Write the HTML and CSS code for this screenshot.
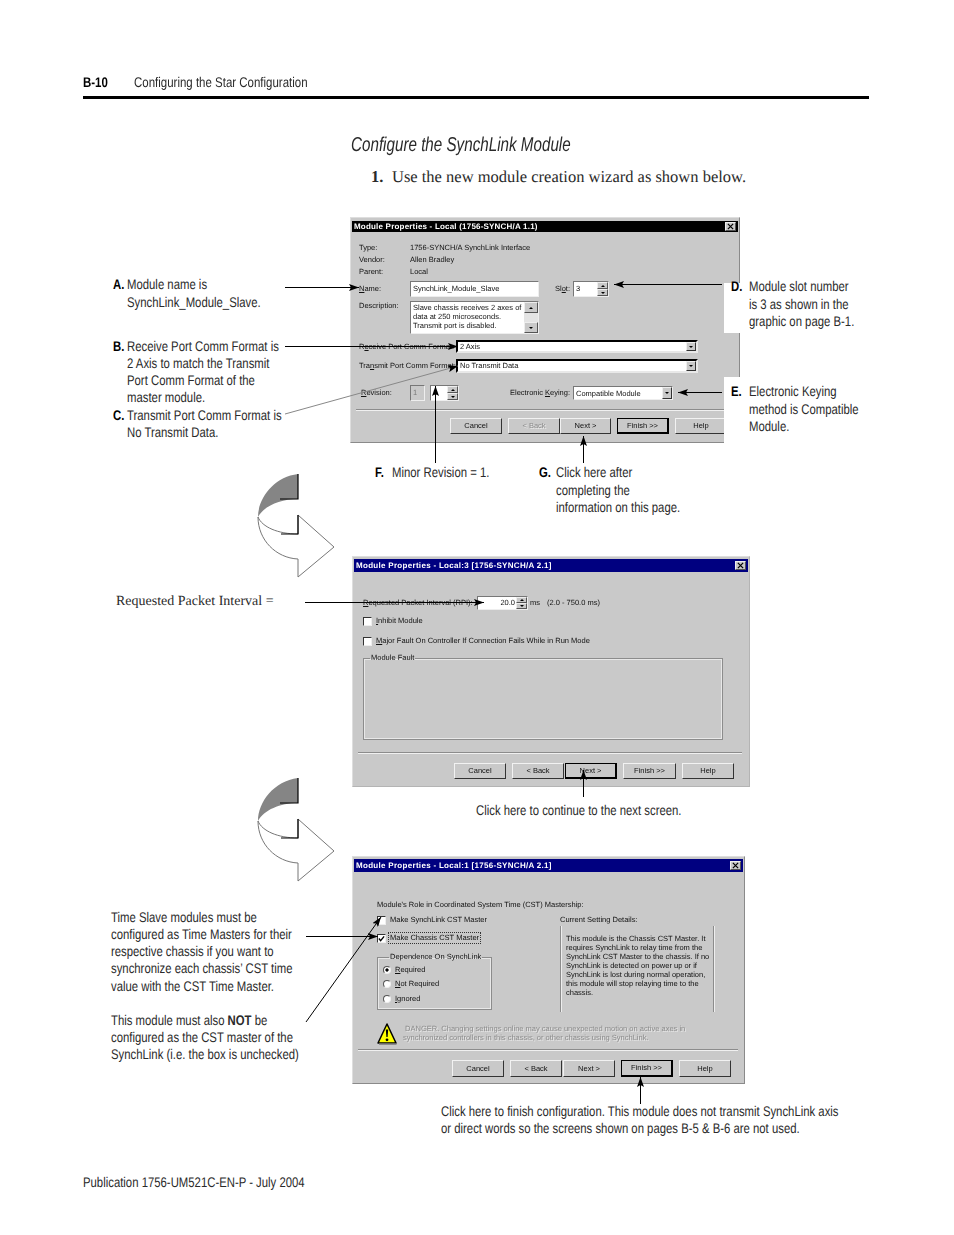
FILE: index.html
```html
<!DOCTYPE html>
<html lang="en">
<head>
  <meta charset="UTF-8" />
  <title>Configuring the Star Configuration</title>
  <link rel="stylesheet" href="styles.css">
</head>
<body>
  <div class="page">
    <header class="page-head">
      <b class="page-num">B-10</b>
      <span>Configuring the Star Configuration</span>
    </header>

    <h2 class="section-title">Configure the SynchLink Module</h2>
    <p class="step"><b>1.</b><span>Use the new module creation wizard as shown below.</span></p>

    <!-- first wizard page -->
    <section class="figure fig-one">
      <div class="notes-left">
        <div class="note note-a"><b>A.</b><span>Module name is<br>SynchLink_Module_Slave.</span></div>
        <div class="note"><b>B.</b><span>Receive Port Comm Format is<br>2 Axis to match the Transmit<br>Port Comm Format of the<br>master module.</span></div>
        <div class="note"><b>C.</b><span>Transmit Port Comm Format is<br>No Transmit Data.</span></div>
      </div>

      <div class="dialog dlg-one">
        <div class="titlebar black"><span>Module Properties - Local (1756-SYNCH/A 1.1)</span><i class="close"><svg viewBox="0 0 8 8"><path d="M1 1L7 7M7 1L1 7"/></svg></i></div>
        <div class="dlg-body">
          <div class="info"><span>Type:</span><span>1756-SYNCH/A SynchLink Interface</span></div>
          <div class="info"><span>Vendor:</span><span>Allen Bradley</span></div>
          <div class="info"><span>Parent:</span><span>Local</span></div>

          <div class="row name-row">
            <label class="lbl-51"><u>N</u>ame:</label>
            <div class="field name-field">SynchLink_Module_Slave</div>
            <label class="slot-lbl">Sl<u>o</u>t:</label>
            <div class="field spin slot-field">3<span class="spin-btns"><i class="up"></i><i class="down"></i></span></div>
          </div>

          <div class="row desc-row">
            <label class="lbl-51">Description:</label>
            <div class="field desc-field">Slave chassis receives 2 axes of<br>data at 250 microseconds.<br>Transmit port is disabled.
              <span class="scroll"><i class="up"></i><em></em><i class="down"></i></span>
            </div>
          </div>

          <div class="row combo-row rx-row">
            <label class="lbl-97">R<u>e</u>ceive Port Comm Format:</label>
            <div class="field combo wide-combo">2 Axis<span class="drop"></span></div>
          </div>
          <div class="row combo-row tx-row">
            <label class="lbl-97">Tra<u>n</u>smit Port Comm Format:</label>
            <div class="field combo wide-combo">No Transmit Data<span class="drop"></span></div>
          </div>

          <div class="row rev-row">
            <label class="lbl-51"><u>R</u>evision:</label>
            <div class="field rev-major">1</div>
            <div class="field spin rev-minor">1<span class="spin-btns"><i class="up"></i><i class="down"></i></span></div>
            <label class="key-lbl">Electronic <u>K</u>eying:</label>
            <div class="field combo key-combo">Compatible Module<span class="drop"></span></div>
          </div>

          <div class="sep sep-one"></div>
          <div class="buttons btns-one">
            <button>Cancel</button>
            <button class="off">&lt; Back</button>
            <button class="tight">Next &gt;</button>
            <button class="main">Finish &gt;&gt;</button>
            <button>Help</button>
          </div>
        </div>
      </div>

      <div class="note note-over note-d"><b>D.</b><span>Module slot number<br>is 3 as shown in the<br>graphic on page B-1.</span></div>
      <div class="note note-over note-e"><b>E.</b><span>Electronic Keying<br>method is Compatible<br>Module.</span></div>
    </section>

    <div class="notes-below">
      <div class="note note-f"><b>F.</b><span>Minor Revision = 1.</span></div>
      <div class="note note-g"><b>G.</b><span>Click here after<br>completing the<br>information on this page.</span></div>
    </div>

    <!-- RPI page -->
    <section class="figure fig-two">
      <p class="serif-note">Requested Packet Interval =</p>
      <div class="dialog dlg-two">
        <div class="titlebar"><span>Module Properties - Local:3 [1756-SYNCH/A 2.1]</span><i class="close"><svg viewBox="0 0 8 8"><path d="M1 1L7 7M7 1L1 7"/></svg></i></div>
        <div class="dlg-body">
          <div class="row rpi-row">
            <label class="lbl-114"><u>R</u>equested Packet Interval (RPI):</label>
            <div class="field spin rpi-field">20.0<span class="spin-btns"><i class="up"></i><i class="down"></i></span></div>
            <span class="unit">ms</span>
            <span>(2.0 - 750.0 ms)</span>
          </div>
          <div class="check-row inhibit"><i class="check"></i><span><u>I</u>nhibit Module</span></div>
          <div class="check-row major"><i class="check"></i><span><u>M</u>ajor Fault On Controller If Connection Fails While in Run Mode</span></div>
          <fieldset class="group fault-group"><legend>Module Fault</legend></fieldset>
          <div class="sep sep-two"></div>
          <div class="buttons btns-two">
            <button>Cancel</button>
            <button>&lt; Back</button>
            <button class="main">Next &gt;</button>
            <button>Finish &gt;&gt;</button>
            <button>Help</button>
          </div>
        </div>
      </div>
    </section>

    <p class="note-plain continue-note">Click here to continue to the next screen.</p>

    <!-- CST page -->
    <section class="figure fig-three">
      <div class="notes-time">
        <p>Time Slave modules must be<br>configured as Time Masters for their<br>respective chassis if you want to<br>synchronize each chassis&rsquo; CST time<br>value with the CST Time Master.</p>
        <p>This module must also <b>NOT</b> be<br>configured as the CST master of the<br>SynchLink (i.e. the box is unchecked)</p>
      </div>
      <div class="dialog dlg-three">
        <div class="titlebar"><span>Module Properties - Local:1 [1756-SYNCH/A 2.1]</span><i class="close"><svg viewBox="0 0 8 8"><path d="M1 1L7 7M7 1L1 7"/></svg></i></div>
        <div class="dlg-body">
          <p class="role-line">Module's Role in Coordinated System Time (CST) Mastership:</p>
          <div class="cst-cols">
            <div class="cst-left">
              <div class="check-row"><i class="check"></i><span>Make SynchLink CST Master</span></div>
              <div class="check-row second"><i class="check on"><svg viewBox="0 0 8 8"><path d="M1 4L3 6.5L7 1.5"/></svg></i><span class="focus">Make Chassis CST Master</span></div>
              <fieldset class="group dep-group">
                <legend>Dependence On SynchLink</legend>
                <div class="radio-row"><i class="radio on"></i><span><u>R</u>equired</span></div>
                <div class="radio-row"><i class="radio"></i><span><u>N</u>ot Required</span></div>
                <div class="radio-row"><i class="radio"></i><span><u>I</u>gnored</span></div>
              </fieldset>
            </div>
            <div class="cst-right">
              <span>Current Setting Details:</span>
              <div class="details">This module is the Chassis CST Master. It<br>requires SynchLink to relay time from the<br>SynchLink CST Master to the chassis. If no<br>SynchLink is detected on power up or if<br>SynchLink is lost during normal operation,<br>this module will stop relaying time to the<br>chassis.</div>
            </div>
          </div>
          <div class="warn-row">
            <svg class="warn-icon" viewBox="0 0 20 22">
              <path d="M10 1L19 20H1Z" fill="#ffff00" stroke="#000" stroke-width="1.5" stroke-linejoin="round"/>
              <path d="M2 21H19.5" stroke="#777" stroke-width="1.5"/>
              <path d="M8.8 6.5H11.2L10.6 14H9.4Z" fill="#000"/>
              <circle cx="10" cy="16.8" r="1.4" fill="#000"/>
            </svg>
            <p class="warn-text">&nbsp;DANGER. Changing settings online may cause unexpected motion on active axes in<br>synchronized controllers in this chassis, or other chassis using SynchLink.</p>
          </div>
          <div class="sep sep-three"></div>
          <div class="buttons btns-three">
            <button>Cancel</button>
            <button>&lt; Back</button>
            <button>Next &gt;</button>
            <button class="main">Finish &gt;&gt;</button>
            <button>Help</button>
          </div>
        </div>
      </div>
    </section>

    <p class="note-plain finish-note">Click here to finish configuration. This module does not transmit SynchLink axis<br>or direct words so the screens shown on pages B-5 &amp; B-6 are not used.</p>

    <footer class="page-foot">Publication 1756-UM521C-EN-P - July 2004</footer>

    <!-- leader lines and the big turn arrows sit over everything -->
    <svg class="overlay" viewBox="0 0 954 1235">
      <defs>
        <marker id="head" markerUnits="userSpaceOnUse" markerWidth="11" markerHeight="7" refX="10" refY="3.5" orient="auto">
          <path d="M0 0L10 3.5L0 7L2 3.5Z" fill="#000"/>
        </marker>
        <g id="turn">
          <path d="M298 474C274 477 258 498 258 517C264 506 280 499 298 499Z" fill="#858585"/>
          <path d="M258 517C262 527 278 534 298 534V515L334 547L298 577V559C276 558 258 540 258 517Z" fill="#fff" stroke="#777" stroke-width="1"/>
          <path d="M298 474V499H280M281 534H298V515" fill="none" stroke="#000" stroke-width="1.2"/>
        </g>
      </defs>
      <use href="#turn"/>
      <use href="#turn" y="304"/>
      <g stroke="#000" stroke-width="1" fill="none">
        <line x1="285" y1="287.5" x2="359" y2="287.5" marker-end="url(#head)"/>
        <line x1="285" y1="346.5" x2="458" y2="346.5" marker-end="url(#head)"/>
        <line x1="285" y1="414" x2="458" y2="366" stroke="#888" marker-end="url(#head)"/>
        <line x1="722" y1="284.5" x2="614" y2="284.5" marker-end="url(#head)"/>
        <line x1="722" y1="392.5" x2="678" y2="392.5" marker-end="url(#head)"/>
        <line x1="435.5" y1="463" x2="435.5" y2="386" marker-end="url(#head)"/>
        <line x1="583.5" y1="463" x2="583.5" y2="436" marker-end="url(#head)"/>
        <line x1="305" y1="602.5" x2="484" y2="602.5" marker-end="url(#head)"/>
        <line x1="583.5" y1="797" x2="583.5" y2="770" marker-end="url(#head)"/>
        <line x1="306" y1="936.5" x2="378" y2="936.5" marker-end="url(#head)"/>
        <line x1="306" y1="1022" x2="381" y2="917" marker-end="url(#head)"/>
        <line x1="640.5" y1="1104" x2="640.5" y2="1077" marker-end="url(#head)"/>
      </g>
    </svg>
  </div>
</body>
</html>
```

FILE: styles.css
```css
* {
  box-sizing: border-box;
}
body {
  margin: 0;
  background: #fff;
}
.page {
  position: relative;
  width: 954px;
  height: 1235px;
  overflow: hidden;
  display: flex;
  flex-direction: column;
  font-family: "Liberation Sans", sans-serif;
  font-size: 14px;
  line-height: 17.2px;
  color: #2a2a2a;
  text-rendering: geometricPrecision;
}
p {
  margin: 0;
}

/* no condensed face is installed, so the book text gets squeezed */
.page-head span, .page-num, .note b, .note span, .note-plain, .notes-time p, .page-foot {
  transform: translateY(1px) scaleX(.81);
  transform-origin: 0 0;
  white-space: nowrap;
}

/* page furniture */
.page-head {
  margin: 0 85px 0 83px;
  padding: 73px 0 5px;
  height: 99px;
  line-height: 18px;
  border-bottom: 3px solid #000;
  display: flex;
}
.page-head span, .page-num {
  transform: scaleX(.82);
}
.page-num {
  width: 51px;
  color: #000;
}
.section-title {
  margin: 35px 0 0 351px;
  font-size: 20px;
  line-height: 22px;
  font-weight: normal;
  font-style: italic;
  transform: scaleX(.76);
  transform-origin: 0 0;
  white-space: nowrap;
}
.step {
  margin: 11px 0 0 371px;
  font-family: "Liberation Serif", serif;
  font-size: 16.5px;
  line-height: 20px;
  display: flex;
}
.step b {
  width: 21px;
}
.page-foot {
  margin: 36.6px 0 0 83px;
}

/* callouts */
.figure {
  display: flex;
}
.note {
  display: flex;
}
.note b {
  width: 14px;
  color: #000;
  flex: none;
}
.notes-left {
  width: 350px;
  padding: 58.4px 0 0 113px;
}
.note-a {
  margin-bottom: 27px;
}
.note-over {
  position: absolute;
  left: 724px;
  width: 140px;
  background: #fff;
  padding-left: 7px;
}
.note-over b {
  width: 18px;
}
.note-d {
  top: 283px;
  height: 50px;
}
.note-e {
  top: 377px;
  height: 66px;
}
.note-over span, .note-over b {
  margin-top: -5.6px;
}
.note-e span, .note-e b {
  margin-top: 5.4px;
}
.notes-below {
  display: flex;
  margin: 20.4px 0 0 375px;
}
.note-f {
  width: 164px;
}
.note-f b, .note-g b {
  width: 17px;
}
.serif-note {
  width: 352px;
  padding: 37px 0 0 116px;
  font-family: "Liberation Serif", serif;
}
.note-plain {
  margin-top: 13.4px;
  margin-left: 476px;
}
.notes-time {
  width: 352px;
  padding: 51.4px 0 0 111px;
}
.notes-time p + p {
  margin-top: 17px;
}
.finish-note {
  margin-left: 441px;
  margin-top: 17.4px;
}

/* dialogs */
.dialog {
  background: #c9c9c9;
  border: 1px solid #dedede;
  border-right-color: #8a8a8a;
  border-bottom-color: #8a8a8a;
  font-family: "Liberation Sans", sans-serif;
  font-size: 7.5px;
  line-height: 10px;
  color: #111;
  filter: blur(0.4px);
}
.fig-one {
  margin-top: 30px;
}
.fig-two {
  margin-top: 41.4px;
}
.fig-three {
  margin-top: 38.4px;
}
.dlg-one {
  width: 390px;
  height: 226px;
  padding-top: 3px;
}
.dlg-two {
  width: 398px;
  height: 231px;
  padding-top: 2px;
  border-right-color: #b4b4b4;
  border-bottom-color: #b4b4b4;
}
.dlg-three {
  width: 393px;
  height: 228px;
  padding-top: 2px;
}
.titlebar {
  margin: 0 1px;
  height: 13px;
  padding: 0 2px;
  background: #000080;
  color: #fff;
  font-size: 8px;
  font-weight: bold;
  letter-spacing: .3px;
  display: flex;
  justify-content: space-between;
  align-items: center;
}
.titlebar.black {
  height: 11px;
  background: #000;
  letter-spacing: .2px;
}
.close {
  width: 11px;
  height: 9px;
  background: #c9c9c9;
  display: flex;
  border: 1px solid #eee;
  border-right-color: #555;
  border-bottom-color: #555;
}
.close svg {
  width: 100%;
  height: 100%;
  stroke: #000;
  stroke-width: 1.4;
}
.dlg-one .dlg-body {
  padding: 10px 0 0 8px;
}
.dlg-two .dlg-body {
  padding: 24px 0 0 10px;
}
.dlg-three .dlg-body {
  padding: 28px 0 0 24px;
}

/* form bits */
.row {
  display: flex;
  align-items: center;
}
.info {
  display: flex;
  height: 12px;
  align-items: center;
}
.info span:first-child, .lbl-51 {
  width: 51px;
  flex: none;
}
.lbl-97 {
  width: 97px;
  flex: none;
  white-space: nowrap;
}
.lbl-114 {
  width: 114px;
  flex: none;
  white-space: nowrap;
}
.field {
  position: relative;
  background: #fff;
  padding-left: 2px;
  border: 1px solid #777;
  border-right-color: #eee;
  border-bottom-color: #eee;
  white-space: nowrap;
}
.name-row {
  margin-top: 3px;
}
.name-field {
  width: 129px;
  height: 16px;
  line-height: 13px;
}
.slot-lbl {
  margin-left: 16px;
  width: 18px;
}
.slot-field {
  width: 36px;
  height: 16px;
  line-height: 14px;
}
.spin-btns {
  position: absolute;
  top: 0;
  right: 0;
  bottom: 0;
  width: 11px;
  display: flex;
  flex-direction: column;
}
.spin-btns i, .scroll i {
  flex: 1;
  background: #c9c9c9;
  border: 1px solid #eee;
  border-right-color: #555;
  border-bottom-color: #555;
  display: flex;
  align-items: center;
  justify-content: center;
}
.up::after, .down::after, .drop::after {
  content: "";
  border-left: 2px solid transparent;
  border-right: 2px solid transparent;
}
.up::after {
  border-bottom: 2px solid #000;
}
.down::after, .drop::after {
  border-top: 2px solid #000;
}
.desc-row {
  margin-top: 4px;
  align-items: flex-start;
}
.desc-field {
  width: 129px;
  height: 33px;
  line-height: 9px;
  padding-top: 1px;
}
.scroll {
  position: absolute;
  top: 0;
  right: 0;
  bottom: 0;
  width: 14px;
  display: flex;
  flex-direction: column;
  background: #e4e4e4;
}
.scroll i {
  flex: none;
  height: 11px;
}
.scroll em {
  flex: 1;
}
.combo {
  line-height: 10px;
}
.combo-row .field {
  border: 2px solid #000;
  border-right-color: #e8e8e8;
  border-bottom-color: #e8e8e8;
}
.wide-combo {
  width: 242px;
  height: 13px;
}
.rx-row {
  margin-top: 6px;
}
.tx-row {
  margin-top: 6px;
}
.tx-row .wide-combo {
  height: 14px;
}
.drop {
  position: absolute;
  top: 0;
  right: 0;
  bottom: 0;
  width: 10px;
  background: #c9c9c9;
  border: 1px solid #eee;
  border-right-color: #333;
  border-bottom-color: #333;
  display: flex;
  align-items: center;
  justify-content: center;
}
.rev-row {
  margin-top: 12px;
}
.rev-row label:first-child {
  padding-left: 2px;
}
.rev-major {
  width: 15px;
  height: 16px;
  line-height: 14px;
  background: #c9c9c9;
  color: #777;
}
.rev-minor {
  margin-left: 5px;
  width: 29px;
  height: 16px;
  line-height: 14px;
}
.key-lbl {
  margin-left: 51px;
  width: 63px;
  white-space: nowrap;
}
.key-combo {
  width: 100px;
  height: 14px;
  line-height: 13px;
}
.sep {
  height: 2px;
  background: #8c8c8c;
  border-bottom: 1px solid #f0f0f0;
}
.sep-one {
  margin: 8px 0 0 -3px;
  width: 372px;
}
.sep-two {
  margin: 12px 0 0 -5px;
  width: 384px;
}
.sep-three {
  margin: 4px 0 0 -19px;
  width: 380px;
}
.buttons {
  display: flex;
  gap: 6px;
}
.buttons button {
  width: 52px;
  height: 16px;
  padding: 0;
  background: #c9c9c9;
  font: inherit;
  color: #111;
  border: 1px solid #f2f2f2;
  border-right-color: #333;
  border-bottom-color: #333;
}
.buttons button.main {
  border: 1px solid #000;
  border-right-width: 2px;
  border-bottom-width: 2px;
}
.buttons button.off {
  color: #8c8c8c;
  text-shadow: 1px 1px 0 #eee;
}
.buttons button:nth-child(3) {
  margin-left: -5px;
}
.btns-one {
  margin: 7px 0 0 91px;
}
.btns-one button:nth-child(3) {
  margin-left: -6px;
  width: 51px;
}
.btns-two {
  margin: 9px 0 0 91px;
}
.btns-two button:nth-child(4) {
  width: 53px;
}
.btns-three {
  margin: 9px 0 0 75px;
}
.btns-three button {
  height: 17px;
}
.rpi-field {
  width: 51px;
  height: 14px;
  line-height: 12px;
  text-align: right;
  padding-right: 12px;
}
.unit {
  margin: 0 7px 0 2px;
}
.check-row {
  display: flex;
  align-items: center;
  height: 10px;
}
.check-row > span {
  margin-left: 4px;
}
.check {
  width: 9px;
  height: 9px;
  background: #fff;
  border: 1px solid #333;
  border-right-color: #eee;
  border-bottom-color: #eee;
  display: flex;
  flex: none;
}
.check svg {
  fill: none;
  stroke: #000;
  stroke-width: 1.5;
}
.inhibit {
  margin-top: 6px;
}
.major {
  margin-top: 10px;
}
.group {
  margin: 0;
  padding: 0;
  border: 1px solid #8c8c8c;
  box-shadow: 0 0 0 1px #e8e8e8 inset;
}
.group legend {
  margin-left: 6px;
  padding: 0 1px;
}
.fault-group {
  margin-top: 7px;
  width: 360px;
  height: 87px;
}
.role-line {
  height: 10px;
}
.cst-cols {
  display: flex;
  height: 100px;
}
.cst-left {
  width: 183px;
  padding-top: 5px;
}
.second {
  margin-top: 8px;
}
.focus {
  outline: 1px dotted #333;
  padding: 0 1px;
  margin-left: 3px !important;
}
.dep-group {
  margin-top: 9px;
  width: 115px;
  height: 58px;
  padding-left: 5px;
}
.radio-row {
  display: flex;
  align-items: center;
  height: 14.5px;
  gap: 4px;
}
.radio {
  width: 8px;
  height: 8px;
  border-radius: 50%;
  background: #fff;
  border: 1px solid #555;
  border-right-color: #eee;
  border-bottom-color: #eee;
}
.radio.on {
  background: radial-gradient(circle, #000 35%, #fff 40%);
}
.cst-right {
  width: 154px;
  margin-top: 5px;
}
.details {
  margin-top: 1px;
  height: 86px;
  width: 154px;
  padding: 8px 0 0 5px;
  line-height: 9px;
  white-space: nowrap;
  border-left: 1px solid #8c8c8c;
  border-right: 1px solid #8c8c8c;
  box-shadow: 1px 0 0 #eee, 1px 0 0 #eee inset;
}
.warn-row {
  display: flex;
  margin-top: 13px;
  height: 22px;
}
.warn-icon {
  width: 20px;
  height: 22px;
}
.warn-text {
  margin-left: 6px;
  line-height: 9px;
  white-space: nowrap;
  color: #8c8c8c;
  text-shadow: 1px 1px 0 #e8e8e8;
  padding-top: 1px;
}

.overlay {
  position: absolute;
  top: 0;
  left: 0;
  width: 954px;
  height: 1235px;
  pointer-events: none;
}
```
